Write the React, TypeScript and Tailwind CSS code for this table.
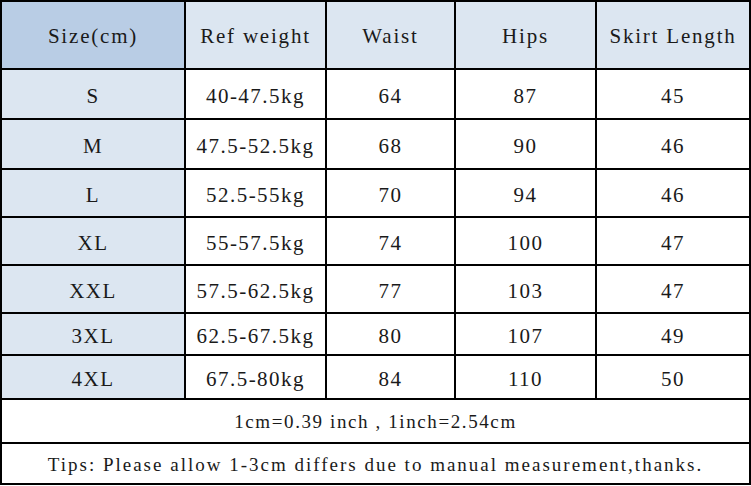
import React from "react";

const rows: [string, string, string, string, string, string][] = [
  ["S", "40-47.5kg", "64", "87", "45", "h-[48px]"],
  ["M", "47.5-52.5kg", "68", "90", "46", "h-[48px]"],
  ["L", "52.5-55kg", "70", "94", "46", "h-[46px]"],
  ["XL", "55-57.5kg", "74", "100", "47", "h-[46px]"],
  ["XXL", "57.5-62.5kg", "77", "103", "47", "h-[46px]"],
  ["3XL", "62.5-67.5kg", "80", "107", "49", "h-[40px]"],
  ["4XL", "67.5-80kg", "84", "110", "50", "h-[42px]"],
];

const headers = ["Size(cm)", "Ref weight", "Waist", "Hips", "Skirt Length"];

export default function App() {
  return (
    <div className="w-[751px] h-[486px] bg-white text-[#1a1a1a] font-['Liberation_Serif',serif]">
      <div className="grid grid-cols-[182px_139px_127px_139px_152px] gap-[2px] p-[2px] bg-black w-[751px]">
        {headers.map((h, i) => (
          <div
            key={h}
            className={`h-[66px] flex items-center justify-center pt-[4px] text-[21px] tracking-[1.8px] ${
              i === 0 ? "bg-[#b9cde5]" : "bg-[#dce6f1]"
            }`}
          >
            {h}
          </div>
        ))}
        {rows.map((r) => (
          <React.Fragment key={r[0]}>
            {r.slice(0, 5).map((c, i) => (
              <div
                key={i}
                className={`${r[5]} flex items-center justify-center pt-[5px] text-[21px] tracking-[1.5px] ${
                  i === 0 ? "bg-[#dce6f1]" : "bg-white"
                }`}
              >
                {c}
              </div>
            ))}
          </React.Fragment>
        ))}
        <div className="col-span-5 h-[42px] bg-white flex items-center justify-center pt-[3px] text-[19px] tracking-[1.6px]">
          1cm=0.39 inch , 1inch=2.54cm
        </div>
        <div className="col-span-5 h-[39px] bg-white flex items-center justify-center pt-[4px] text-[19px] tracking-[2px]">
          Tips: Please allow 1-3cm differs due to manual measurement,thanks.
        </div>
      </div>
    </div>
  );
}
